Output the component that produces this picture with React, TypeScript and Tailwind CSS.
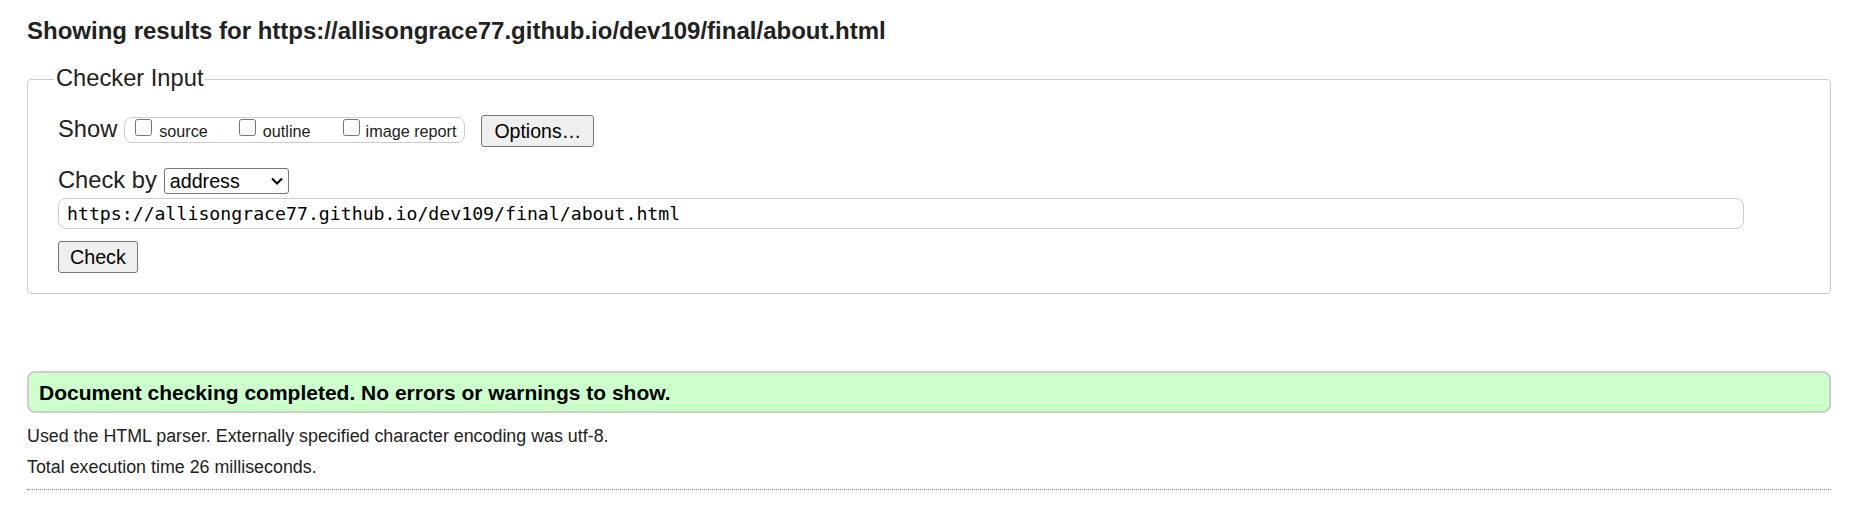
import React from "react";

function Check({ label, ml, tl }: { label: string; ml: string; tl: string }) {
  return (
    <>
      <input
        type="checkbox"
        className={`${ml} m-0 mt-[1px] h-[17px] w-[17px] shrink-0`}
      />
      <span className={`${tl} mt-[3px] text-[16.2px] leading-[20px] text-[#222]`}>{label}</span>
    </>
  );
}

export default function App() {
  return (
    <div
      className="w-[1857px] h-[511px] bg-white pl-[27px] pr-[26px] text-[#222]"
      style={{ fontFamily: "'Liberation Sans', Arial, sans-serif" }}
    >
      <h2 className="pt-[17px] text-[24px] font-bold leading-[28px] text-[#222] whitespace-nowrap">
        Showing results for https://allisongrace77.github.io/dev109/final/about.html
      </h2>

      <fieldset className="mt-[19px] w-full rounded-[4px] border border-[#cccccc] pl-[26px] pr-0 pt-0 pb-[20px]">
        <legend className="px-[2px] pb-[3px] text-[23.7px] leading-[28px] text-[#222]">
          Checker Input
        </legend>
        <div className="pl-[4px] pt-[20px]">
          <div className="flex items-start">
            <span className="text-[23.7px] leading-[28px]">Show</span>
            <div className="ml-[7px] mt-[2px] flex h-[26px] items-start rounded-[8px] border border-[#cccccc] pl-[10px] pr-[8px]">
              <Check label="source" ml="ml-0" tl="ml-[7px]" />
              <Check label="outline" ml="ml-[31px]" tl="ml-[7px]" />
              <Check label="image report" ml="ml-[32px]" tl="ml-[6px]" />
            </div>
            <button
              type="button"
              className="ml-[16px] rounded-[3px] border border-[#767676] bg-[#efefef] px-[12px] py-[3px] text-[19.5px] leading-[24px] text-black"
            >
              Options…
            </button>
          </div>

          <div className="mt-[19px] flex items-start">
            <span className="text-[23.7px] leading-[28px]">Check by</span>
            <div className="ml-[7px] mt-[2px] flex h-[26px] w-[125px] items-center justify-between rounded-[3px] border border-[#767676] bg-white pl-[5px] pr-[5px] text-[19.7px] leading-[24px] text-black">
              <span>address</span>
              <svg width="12" height="8" viewBox="0 0 12 8" fill="none">
                <polyline points="1,1.5 6,6.5 11,1.5" stroke="#000" strokeWidth="2" />
              </svg>
            </div>
          </div>

          <input
            readOnly
            value="https://allisongrace77.github.io/dev109/final/about.html"
            className="mt-[4px] block h-[31px] w-[1686px] rounded-[8px] border border-[#cccccc] bg-white pl-[8px] text-[18.2px] text-black outline-none"
            style={{ fontFamily: "'DejaVu Sans Mono', 'Liberation Mono', monospace" }}
          />

          <button
            type="button"
            className="mt-[12px] block rounded-[3px] border border-[#767676] bg-[#efefef] px-[11px] py-[3px] text-[19.7px] leading-[24px] text-black"
          >
            Check
          </button>
        </div>
      </fieldset>

      <div className="mt-[77px] w-full rounded-[8px] border-2 border-[#cccccc] bg-[#ccffcc] pl-[10px] pt-[8px] pb-[6px] text-[21px] font-bold leading-[24px] text-black">
        Document checking completed. No errors or warnings to show.
      </div>

      <p className="mt-[8px] text-[17.85px] leading-[31px] text-[#222]">
        Used the HTML parser. Externally specified character encoding was utf-8.
      </p>
      <p className="text-[17.85px] leading-[31px] text-[#222]">Total execution time 26 milliseconds.</p>
      <div className="mt-[6px] w-full border-t border-dotted border-[#888]" />
    </div>
  );
}
